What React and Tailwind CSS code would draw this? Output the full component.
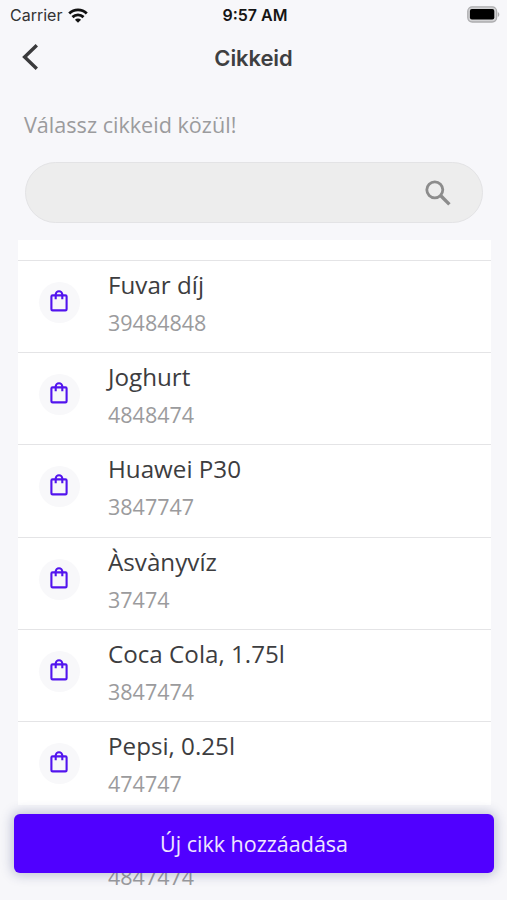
const items = [
  ["Fuvar díj", "39484848"],
  ["Joghurt", "4848474"],
  ["Huawei P30", "3847747"],
  ["Àsvànyvíz", "37474"],
  ["Coca Cola, 1.75l", "3847474"],
  ["Pepsi, 0.25l", "474747"],
];

function WifiIcon() {
  return (
    <svg className="ml-[6px] h-[15px] w-[20px]" viewBox="0 0 21 15" fill="none" stroke="#111" strokeWidth="3">
      <path d="M1.3 5.4a13.2 13.2 0 0 1 18.4 0" />
      <path d="M4.7 9.2a8.4 8.4 0 0 1 11.6 0" />
      <path d="M10.5 15 7.3 11.9a4.5 4.5 0 0 1 6.4 0Z" fill="#111" stroke="none" />
    </svg>
  );
}

function BatteryIcon() {
  return (
    <svg className="h-[17px] w-[33px]" viewBox="0 0 33 17">
      <rect x="0.8" y="0.8" width="28.8" height="15.2" rx="4.4" fill="#d2d2d4" stroke="#adadaf" strokeWidth="1.3" />
      <rect x="2.9" y="3" width="24.4" height="10.6" rx="2" fill="#000" />
      <path d="M30.8 6v5c2-.8 2-4.2 0-5Z" fill="#adadaf" />
    </svg>
  );
}

function BagIcon() {
  return (
    <svg className="h-[22px] w-[18px]" viewBox="0 0 18 22" fill="none" stroke="#5214ee" strokeWidth="2.1">
      <rect x="1.4" y="5.4" width="15.2" height="15" rx="1.2" />
      <path d="M5.7 9.2V4.6a3.3 3.3 0 0 1 6.6 0v4.6" />
    </svg>
  );
}

function Row({ name, code }) {
  return (
    <li className="flex h-[92.35px] border-t border-[#e4e4e6]">
      <div className="ml-[21px] mt-[21px] flex size-[41px] shrink-0 items-center justify-center rounded-full bg-[#f8f8fa] pb-[3px] pr-px">
        <BagIcon />
      </div>
      <div className="ml-[28px] pt-[6px]">
        <div className="text-[24.2px] leading-[36px] text-[#3d3d3f]">{name}</div>
        <div className="mt-[3px] text-[21.5px] leading-[34px] text-[#9b9b9d]">{code}</div>
      </div>
    </li>
  );
}

export default function App() {
  return (
    <div className="relative flex h-[900px] w-[507px] flex-col overflow-hidden bg-[#f7f7fa] font-['Open_Sans',sans-serif]">
      <div className="grid h-[30px] grid-cols-3 items-center pl-[10px] pr-[7px] font-['Inter',sans-serif] text-[16px]">
        <div className="flex items-center text-[#333]">
          Carrier
          <WifiIcon />
        </div>
        <div className="whitespace-nowrap text-center font-semibold text-[#151515]">9:57 AM</div>
        <div className="flex justify-end pb-[2px]">
          <BatteryIcon />
        </div>
      </div>

      <header className="grid h-[56px] grid-cols-3 items-center">
        <svg className="mb-[2px] ml-[21px] h-[28px] w-[18px]" viewBox="0 0 18 28" fill="none" stroke="#3a3a3c" strokeWidth="3.4">
          <path d="M15.8 2.2 3.6 14l12.2 11.8" />
        </svg>
        <h1 className="text-center font-['Inter',sans-serif] text-[22px] font-semibold tracking-[-0.1px] text-[#3f3f41]">Cikkeid</h1>
      </header>

      <p className="ml-[24px] mt-[22px] text-[21.6px] leading-[34px] text-[#9b9b9d]">Válassz cikkeid közül!</p>

      <div className="ml-[25px] mt-[20px] flex h-[61px] w-[458px] shrink-0 items-center justify-end rounded-full border-[1.5px] border-[#e3e3e5] bg-[#ededed] pr-[31px]">
        <svg className="size-[26px]" viewBox="0 0 26 26" fill="none" stroke="#8c8c8c">
          <circle cx="9.8" cy="9.8" r="8" strokeWidth="2.8" />
          <path d="m15.8 15.8 8.6 8.6" strokeWidth="3.4" />
        </svg>
      </div>

      <div className="ml-[18px] mt-[17px] h-[565px] w-[473px] shrink-0 bg-white pt-[19.6px]">
        <ul>
          {items.map(([name, code]) => (
            <Row key={name} name={name} code={code} />
          ))}
        </ul>
        <div className="pl-[90px] pt-[46px] text-[21.5px] leading-[34px] text-[#9b9b9d]">4847474</div>
      </div>

      <button className="absolute left-[14px] top-[814px] h-[59px] w-[480px] rounded-[6px] bg-[#5000ff] pt-px text-[21.5px] text-[#f0e6ff] shadow-[0_0_12px_2px_rgba(40,50,110,0.28)]">
        Új cikk hozzáadása
      </button>
    </div>
  );
}
